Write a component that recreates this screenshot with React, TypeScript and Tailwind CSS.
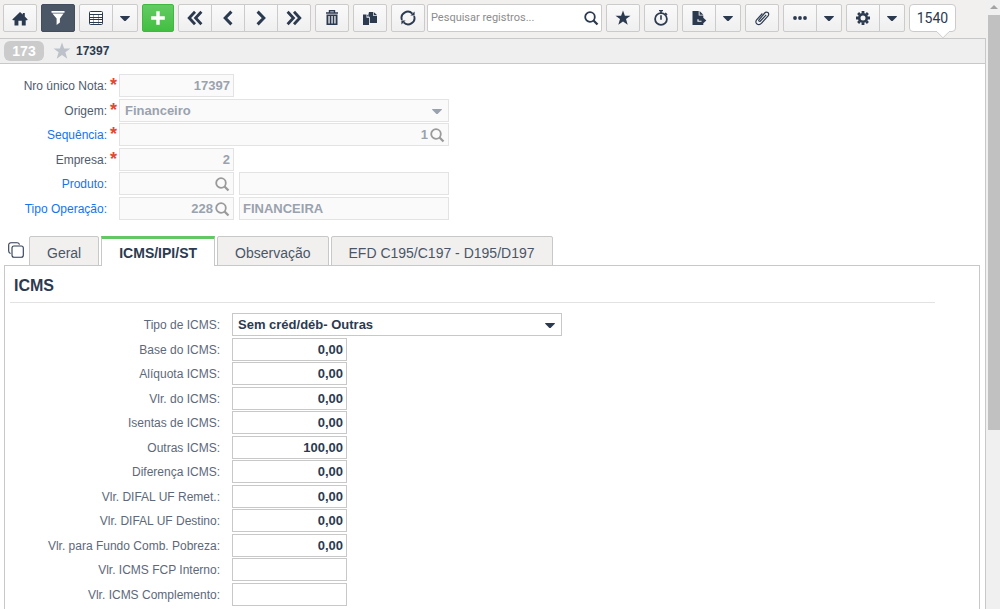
import { useState } from "react";
import type { ReactNode } from "react";

const icons = {
  home: (
    <path d="M8 2l2.8 2.6V3h2v3.5l2.9 2.9-.6.9h-1.4V15.4H9.8v-4.6H6.4v4.6H2.5v-5.1H.9l-.6-.9z" />
  ),
  filter: (
    <path d="M1.5 1h13v1.8h-13zM2.4 3.4h11.2L9.9 8.6v3.9L6.6 15V8.6z" />
  ),
  table: (
    <>
      <rect x="1.5" y="1.5" width="13" height="13" rx="1" fill="#fff" stroke="currentColor" />
      <path d="M2 4h12v1H2zM2 7h12v1H2zM2 9h12v1H2zM2 12h12v1H2z" />
      <path d="M5 5h1v9H5zM10 5h1v9h-1z" opacity=".45" />
    </>
  ),
  plus: <path d="M6.3 1.2h3.4v5.1h5.1v3.4H9.7v5.1H6.3V9.7H1.2V6.3h5.1z" />,
  first: (
    <path d="M8 1.8L2.2 8 8 14.2M14.4 1.8L8.6 8l5.8 6.2" fill="none" stroke="currentColor" strokeWidth="2.8" />
  ),
  prev: <path d="M11.4 1.6L5.2 8l6.2 6.4" fill="none" stroke="currentColor" strokeWidth="3" />,
  next: <path d="M4.6 1.6l6.2 6.4-6.2 6.4" fill="none" stroke="currentColor" strokeWidth="3" />,
  last: (
    <path d="M1.6 1.8L7.4 8l-5.8 6.2M8 1.8L13.8 8 8 14.2" fill="none" stroke="currentColor" strokeWidth="2.8" />
  ),
  trash: (
    <>
      <path d="M5.5 2.6V.8h5v1.8M2 3h12" fill="none" stroke="currentColor" strokeWidth="1.4" />
      <path
        fillRule="evenodd"
        d="M2.5 4.6h11V15h-11zM4.4 6v7.6h1.3V6zM7.4 6v7.6h1.3V6zM10.3 6v7.6h1.3V6z"
      />
    </>
  ),
  copy: (
    <>
      <path d="M1 4.5h3.5v3.2H7V15H1zM5.2 4.5L7 6.6H5.2z" />
      <path d="M7 2h4v3.8h4V13H7.8V7.2L6.2 5.4zM11.7 2L15 5h-3.3z" />
    </>
  ),
  refresh: (
    <>
      <path
        d="M1.9 10A6.3 6.3 0 0 1 12.4 3.6M14.1 6A6.3 6.3 0 0 1 3.6 12.4"
        fill="none"
        stroke="currentColor"
        strokeWidth="1.9"
      />
      <path d="M14.6 1.4v4.2h-4.2zM1.4 14.6v-4.2h4.2z" />
    </>
  ),
  search: (
    <>
      <circle cx="7" cy="7" r="4.8" fill="none" stroke="currentColor" strokeWidth="1.8" />
      <path d="M10.3 10.3l4.2 4.2" stroke="currentColor" strokeWidth="2.3" />
    </>
  ),
  star: <path d="M8 .4l1.9 5.3h5.6L11 9.1l1.7 5.7L8 11.5l-4.7 3.3L5 9.1.5 5.7h5.6z" />,
  timer: (
    <>
      <circle cx="8" cy="9" r="5.9" fill="none" stroke="currentColor" strokeWidth="1.8" />
      <path d="M7.2 5.2h1.6v4.6H7.2zM6-.4h4v1.6H8.8v2H7.2v-2H6zM12.6 2.4l2 1.8-.9 1-2-1.8z" />
    </>
  ),
  exportFile: (
    <path d="M1.5 1h6.2v4.6h4.6v2.2l3 2.7-3 2.7v1.8H1.5zM8.6 1l3.7 3.7H8.6zM6.4 9.3v2.4h4.1v-1H7.6V9.3z" fillRule="evenodd" />
  ),
  clip: (
    <path
      d="M12.2 4.8L6.4 11c-.9.9-2.2-.2-1.4-1.2L10.7 3c1.9-2.2 5.4.1 3.4 2.8l-6.5 7.4C4.5 16.6.1 13.2 2.6 9.9l5.8-6.4"
      fill="none"
      stroke="currentColor"
      strokeWidth="1.2"
    />
  ),
  dots: (
    <>
      <circle cx="3" cy="8" r="1.9" />
      <circle cx="8" cy="8" r="1.9" />
      <circle cx="13" cy="8" r="1.9" />
    </>
  ),
  gear: (
    <>
      <circle cx="8" cy="8" r="3.8" fill="none" stroke="currentColor" strokeWidth="2.6" />
      <path
        d="M8 1v2.5M8 12.5V15M1 8h2.5M12.5 8H15M3.1 3.1l1.6 1.6M11.3 11.3l1.6 1.6M12.9 3.1l-1.6 1.6M4.7 11.3l-1.6 1.6"
        stroke="currentColor"
        strokeWidth="2.8"
      />
    </>
  ),
  caret: <path d="M3.2 6h9.6v.8L8.6 11H7.4L3.2 6.8z" />,
};

type IconName = keyof typeof icons;

function Icon({ name, className = "size-4" }: { name: IconName; className?: string }) {
  return (
    <svg viewBox="0 0 16 16" fill="currentColor" aria-hidden="true" className={className}>
      {icons[name]}
    </svg>
  );
}

const toolButton = "flex h-7 shrink-0 items-center justify-center border";
const lightButton =
  "border-[#cbcbcb] bg-linear-to-b from-[#fafafa] to-[#efefef] -ml-px first:ml-0 first:rounded-l-xs last:rounded-r-xs";

function ToolGroup({ items }: { items: { icon: IconName; label: string }[] }) {
  return (
    <div className="flex shrink-0">
      {items.map((item) => (
        <button
          key={item.label}
          type="button"
          aria-label={item.label}
          className={`${toolButton} ${lightButton} ${item.icon === "caret" ? "w-[26px]" : "w-[34px]"}`}
        >
          <Icon name={item.icon} />
        </button>
      ))}
    </div>
  );
}

function Toolbar() {
  return (
    <div className="flex h-[38px] items-start gap-1 bg-[#f1f0ee] pt-1 pl-[3px]">
      <ToolGroup items={[{ icon: "home", label: "Início" }]} />
      <button
        type="button"
        aria-label="Filtro"
        className={`${toolButton} w-[34px] rounded-xs border-[#424e5e] bg-[#4b5767] text-white`}
      >
        <Icon name="filter" />
      </button>
      <ToolGroup items={[{ icon: "table", label: "Grade" }, { icon: "caret", label: "Opções da grade" }]} />
      <button
        type="button"
        aria-label="Adicionar"
        className={`${toolButton} w-8 rounded-xs border-[#3fb83f] bg-linear-to-b from-[#62cb62] to-[#41bf41] text-white`}
      >
        <Icon name="plus" />
      </button>
      <ToolGroup
        items={[
          { icon: "first", label: "Primeiro" },
          { icon: "prev", label: "Anterior" },
          { icon: "next", label: "Próximo" },
          { icon: "last", label: "Último" },
        ]}
      />
      <ToolGroup items={[{ icon: "trash", label: "Excluir" }]} />
      <ToolGroup items={[{ icon: "copy", label: "Duplicar" }]} />
      <div className="flex gap-0.5">
        <ToolGroup items={[{ icon: "refresh", label: "Atualizar" }]} />
        <div className="flex h-7 w-[175px] items-center rounded-xs border border-[#cbcbcb] bg-white pr-0.5 pl-[3px]">
          <input
            type="search"
            aria-label="Pesquisar registros"
            placeholder="Pesquisar registros..."
            className="min-w-0 flex-1 font-[Roboto,sans-serif] text-[11px] outline-none placeholder:text-[#8c8c8c]"
          />
          <button type="button" aria-label="Pesquisar">
            <Icon name="search" />
          </button>
        </div>
      </div>
      <ToolGroup items={[{ icon: "star", label: "Favoritos" }]} />
      <ToolGroup items={[{ icon: "timer", label: "Cronômetro" }]} />
      <ToolGroup items={[{ icon: "exportFile", label: "Exportar" }, { icon: "caret", label: "Opções de exportação" }]} />
      <ToolGroup items={[{ icon: "clip", label: "Anexos" }]} />
      <ToolGroup items={[{ icon: "dots", label: "Mais" }, { icon: "caret", label: "Mais opções" }]} />
      <ToolGroup items={[{ icon: "gear", label: "Configurações" }, { icon: "caret", label: "Opções de configuração" }]} />
      <div className="relative flex h-7 w-[47px] shrink-0 items-center justify-center rounded-sm border border-[#cbcbcb] bg-white font-[Roboto,sans-serif] text-sm">
        1540
        <svg viewBox="0 0 12 8" className="absolute top-[26px] right-1.5 h-2 w-3" aria-hidden="true">
          <path d="M0 0h12v1L6 7 0 1z" fill="#fff" />
          <path d="M0 .8l6 6 6-6" fill="none" stroke="#cbcbcb" />
        </svg>
      </div>
    </div>
  );
}

const rowClass = "flex h-[23px] items-center odd:mb-0.5 even:mb-px";
const lockedBox = "flex h-[23px] items-center border border-[#e3e3e3] bg-[#fafafa]";
const lockedText = "min-w-0 flex-1 text-[13px] font-bold text-[#9aa2ae] opacity-100 outline-none";

type HeaderRowProps = {
  id: string;
  label: string;
  required?: boolean;
  link?: boolean;
  children: ReactNode;
};

function HeaderRow({ id, label, required, link, children }: HeaderRowProps) {
  return (
    <div className={rowClass}>
      <label
        htmlFor={id}
        className={`w-[107px] shrink-0 text-right text-xs ${link ? "text-[#1473f5]" : "text-[#4f5b6e]"}`}
      >
        {link ? <a href={`#${id}`}>{label}</a> : label}
      </label>
      <span className="w-3 shrink-0 self-start pl-[3px] text-lg leading-[22px] font-bold text-[#e04a35]">
        {required && "*"}
      </span>
      {children}
    </div>
  );
}

function LockedField({ id, value, width, lookup }: { id: string; value: string; width: string; lookup?: boolean }) {
  return (
    <div className={`${lockedBox} ${width} pr-[3px]`}>
      <input id={id} readOnly value={value} className={`${lockedText} text-right`} />
      {lookup && (
        <button type="button" aria-label="Localizar" className="ml-px text-[#9a9a9a]">
          <Icon name="search" />
        </button>
      )}
    </div>
  );
}

function HeaderForm() {
  return (
    <div className="pt-[10px]">
      <HeaderRow id="nota" label="Nro único Nota:" required>
        <LockedField id="nota" value="17397" width="w-[115px]" />
      </HeaderRow>
      <HeaderRow id="origem" label="Origem:" required>
        <div className={`${lockedBox} w-[330px] pr-[3px] text-[#9aa2ae]`}>
          <select id="origem" disabled className={`${lockedText} appearance-none pl-[5px]`}>
            <option>Financeiro</option>
          </select>
          <Icon name="caret" />
        </div>
      </HeaderRow>
      <HeaderRow id="sequencia" label="Sequência:" required link>
        <LockedField id="sequencia" value="1" width="w-[330px]" lookup />
      </HeaderRow>
      <HeaderRow id="empresa" label="Empresa:" required>
        <LockedField id="empresa" value="2" width="w-[115px]" />
      </HeaderRow>
      <HeaderRow id="produto" label="Produto:" link>
        <LockedField id="produto" value="" width="w-[115px]" lookup />
        <div className={`${lockedBox} ml-[5px] w-[210px] pl-[3px]`}>
          <input readOnly value="" aria-label="Descrição do produto" className={lockedText} />
        </div>
      </HeaderRow>
      <HeaderRow id="operacao" label="Tipo Operação:" link>
        <LockedField id="operacao" value="228" width="w-[115px]" lookup />
        <div className={`${lockedBox} ml-[5px] w-[210px] pl-[3px]`}>
          <input readOnly value="FINANCEIRA" aria-label="Descrição da operação" className={lockedText} />
        </div>
      </HeaderRow>
    </div>
  );
}

const tabs = ["Geral", "ICMS/IPI/ST", "Observação", "EFD C195/C197 - D195/D197"];

function Tabs() {
  const [active, setActive] = useState(tabs[1]);
  return (
    <div className="mt-[15px] flex items-end pl-2">
      <button type="button" aria-label="Duplicar aba" className="mr-[5px] mb-[7px]">
        <svg viewBox="0 0 16 16" fill="none" stroke="currentColor" strokeWidth="1.1" className="size-4">
          <rect x="4" y="4" width="11.3" height="11.3" rx="2" />
          <path d="M2.6 11.5C1.3 11.2.7 10.4.7 9V3C.7 1.5 1.5.7 3 .7h6c1.4 0 2.2.6 2.5 1.9" />
        </svg>
      </button>
      <div role="tablist" className="-mb-px flex gap-0.5">
        {tabs.map((tab) => (
          <button
            key={tab}
            type="button"
            role="tab"
            aria-selected={tab === active}
            onClick={() => setActive(tab)}
            className={
              tab === active
                ? "relative h-[30px] border-x border-t-3 border-x-[#c8c8c8] border-t-[#63c763] bg-white px-[17px] text-sm font-bold"
                : "h-[30px] rounded-t-xs border border-[#c8c8c8] bg-[#f1f0ef] px-[17px] pt-1 text-sm text-[#4a5668]"
            }
          >
            {tab}
          </button>
        ))}
      </div>
    </div>
  );
}

const amounts = [
  { id: "base", label: "Base do ICMS:", value: "0,00" },
  { id: "aliquota", label: "Alíquota ICMS:", value: "0,00" },
  { id: "valor", label: "Vlr. do ICMS:", value: "0,00" },
  { id: "isentas", label: "Isentas de ICMS:", value: "0,00" },
  { id: "outras", label: "Outras ICMS:", value: "100,00" },
  { id: "diferenca", label: "Diferença ICMS:", value: "0,00" },
  { id: "difal-remet", label: "Vlr. DIFAL UF Remet.:", value: "0,00" },
  { id: "difal-destino", label: "Vlr. DIFAL UF Destino:", value: "0,00" },
  { id: "fundo", label: "Vlr. para Fundo Comb. Pobreza:", value: "0,00" },
  { id: "fcp", label: "Vlr. ICMS FCP Interno:", value: "" },
  { id: "complemento", label: "Vlr. ICMS Complemento:", value: "" },
];

const panelLabel = "mr-3 w-[215px] shrink-0 text-right text-xs text-[#5d687a]";

function IcmsPanel() {
  return (
    <section className="mr-[5px] ml-1 flex-1 border border-b-0 border-[#c8c8c8]">
      <h2 className="mr-11 ml-[5px] border-b border-[#e2e2e2] pt-2 pb-1 pl-1 text-base leading-6 font-bold">
        ICMS
      </h2>
      <div className="pt-[10px]">
        <div className={rowClass}>
          <label htmlFor="tipo" className={panelLabel}>
            Tipo de ICMS:
          </label>
          <div className="flex h-[23px] w-[330px] items-center border border-[#c8c8c8] bg-white pr-[3px]">
            <select
              id="tipo"
              className="min-w-0 flex-1 appearance-none pl-[5px] text-[13px] font-bold outline-none"
            >
              <option>Sem créd/déb- Outras</option>
            </select>
            <Icon name="caret" />
          </div>
        </div>
        {amounts.map((field) => (
          <div key={field.id} className={rowClass}>
            <label htmlFor={field.id} className={panelLabel}>
              {field.label}
            </label>
            <input
              id={field.id}
              defaultValue={field.value}
              className="h-[23px] w-[115px] border border-[#c8c8c8] bg-white pr-[3px] text-right text-[13px] font-bold outline-none"
            />
          </div>
        ))}
      </div>
    </section>
  );
}

export default function App() {
  return (
    <div className="flex h-screen overflow-hidden bg-white font-['Liberation_Sans',Arial,sans-serif] text-[#2c3a50]">
      <div className="flex min-w-0 flex-1 flex-col">
        <Toolbar />
        <main className="flex flex-1 flex-col border-t border-r border-[#c8c8c8]">
          <header className="flex h-[25px] items-center border-b border-[#c8c8c8] bg-[#efefef] pl-1">
            <span className="flex h-5 w-10 items-center justify-center rounded-md bg-[#cbcbcb] text-sm font-bold text-white">
              173
            </span>
            <button type="button" aria-label="Favorito" className="ml-[9px] text-[#bcc1ca]">
              <Icon name="star" className="size-[18px]" />
            </button>
            <h1 className="ml-[5px] text-xs font-bold">17397</h1>
          </header>
          <HeaderForm />
          <Tabs />
          <IcmsPanel />
        </main>
      </div>
      <div className="flex w-3.5 shrink-0 flex-col items-end bg-[#f0f0f0]">
        <svg viewBox="0 0 12 15" fill="#a3a3a3" className="h-[15px] w-3" aria-hidden="true">
          <path d="M6 5l4 4H2z" />
        </svg>
        <div className="h-[415px] w-3 bg-[#c1c1c1]" />
      </div>
    </div>
  );
}
